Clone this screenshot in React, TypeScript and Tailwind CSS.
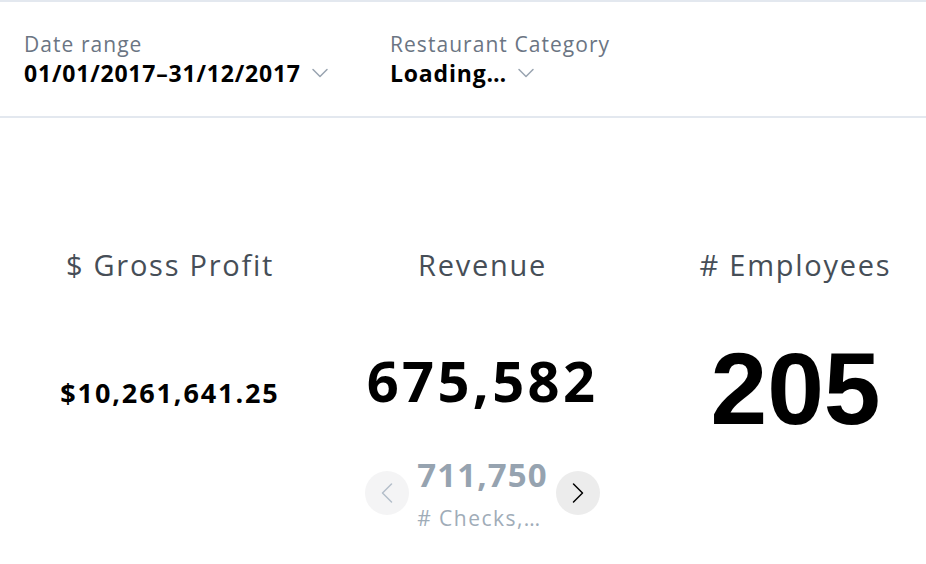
import { ChevronDown, ChevronLeft, ChevronRight } from 'lucide-react';

const sans = { fontFamily: '"Open Sans", "Noto Sans", sans-serif' };

function Filter({ label, value, width }: { label: string; value: string; width: string }) {
  return (
    <div className={`flex flex-col ${width}`}>
      <span className="text-[21px] leading-[24px] tracking-[0.05em] text-[#6b7583]">{label}</span>
      <div className="mt-[2px] flex items-center">
        <span className="text-[23px] font-bold leading-[28px] tracking-[0.035em] text-black">{value}</span>
        <ChevronDown className="ml-[5px] mt-[1px] h-7 w-7 text-[#9aa5b1]" strokeWidth={1.3} />
      </div>
    </div>
  );
}

function Title({ children }: { children: string }) {
  return <div className="text-[29px] leading-[34px] tracking-[0.06em] text-[#464e57]">{children}</div>;
}

export default function App() {
  return (
    <div className="h-[564px] w-[926px] overflow-hidden bg-white" style={sans}>
      <div className="flex h-[118px] border-y-2 border-[#e3e8ef] px-6 pt-[30px]">
        <Filter label="Date range" value="01/01/2017–31/12/2017" width="w-[366px]" />
        <Filter label="Restaurant Category" value="Loading…" width="w-[300px]" />
      </div>

      <div className="flex pl-[14px] pt-[130px]">
        <div className="flex w-[312px] shrink-0 flex-col items-center">
          <Title>$ Gross Profit</Title>
          <div className="mt-[95px] text-[27px] font-bold leading-[32px] tracking-[0.07em] text-black">
            $10,261,641.25
          </div>
        </div>

        <div className="flex w-[313px] shrink-0 flex-col items-center">
          <Title>Revenue</Title>
          <div className="mt-[66px] text-[56px] font-bold leading-[64px] tracking-[0.06em] text-black">675,582</div>
          <div className="mt-[41px] flex items-center gap-2">
            <button className="flex h-11 w-11 items-center justify-center rounded-full bg-[#f4f4f5]">
              <ChevronLeft className="h-9 w-9 text-[#b4bfca]" strokeWidth={1} />
            </button>
            <div className="flex flex-col items-start">
              <span className="text-[33px] font-bold leading-[44px] tracking-[0.035em] text-[#96a3b0]">711,750</span>
              <span className="mt-[6px] text-[21px] leading-[30px] tracking-[0.07em] text-[#a0acb8]"># Checks,…</span>
            </div>
            <button className="flex h-11 w-11 items-center justify-center rounded-full bg-[#ececec]">
              <ChevronRight className="h-9 w-9 text-black" strokeWidth={1} />
            </button>
          </div>
        </div>

        <div className="flex w-[313px] shrink-0 flex-col items-center">
          <Title># Employees</Title>
          <div
            className="mt-[52px] text-[102px] font-bold leading-[110px] text-black"
            style={{ fontFamily: '"Liberation Sans", Arial, sans-serif' }}
          >
            205
          </div>
        </div>
      </div>
    </div>
  );
}
